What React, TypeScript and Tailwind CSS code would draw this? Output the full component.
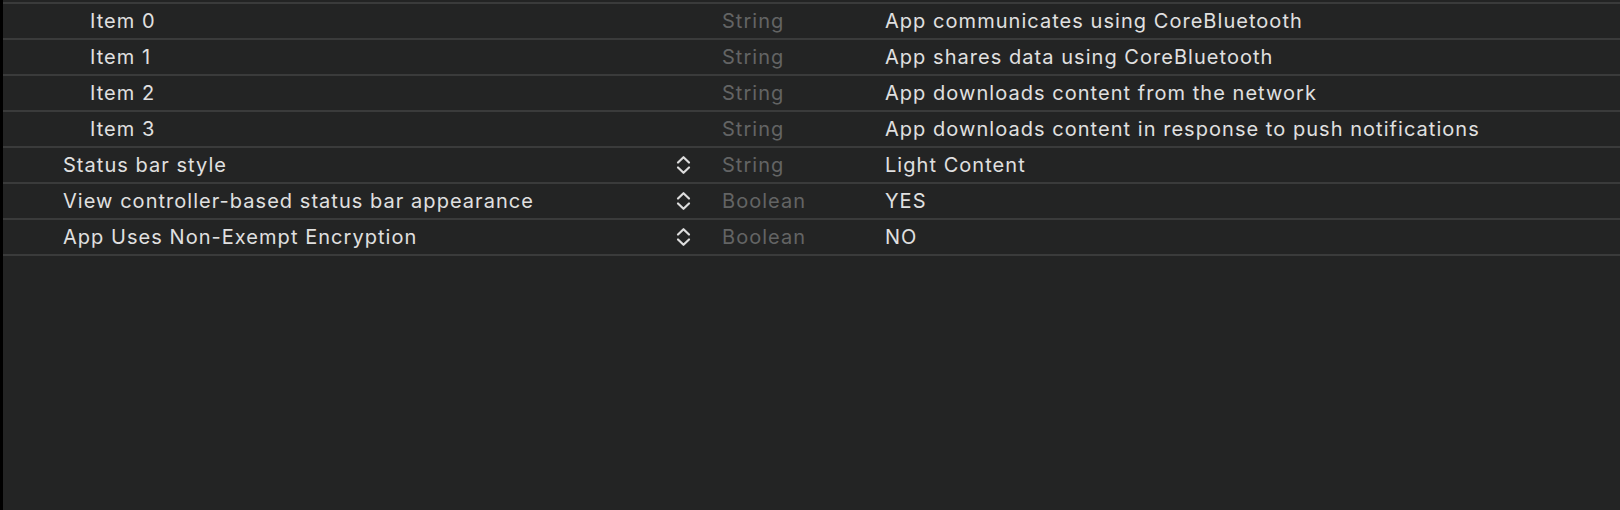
import React from "react";

type Row = {
  name: string;
  type: string;
  value: string;
  child?: boolean;
};

const rows: Row[] = [
  { name: "Item 0", type: "String", value: "App communicates using CoreBluetooth", child: true },
  { name: "Item 1", type: "String", value: "App shares data using CoreBluetooth", child: true },
  { name: "Item 2", type: "String", value: "App downloads content from the network", child: true },
  { name: "Item 3", type: "String", value: "App downloads content in response to push notifications", child: true },
  { name: "Status bar style", type: "String", value: "Light Content" },
  { name: "View controller-based status bar appearance", type: "Boolean", value: "YES" },
  { name: "App Uses Non-Exempt Encryption", type: "Boolean", value: "NO" },
];

const Stepper = () => (
  <svg width="15" height="20" viewBox="0 0 15 20" fill="none" stroke="#dcdcdc" strokeWidth="2.2" strokeLinecap="round" strokeLinejoin="round">
    <path d="M2 7.5 L7.5 2.2 L13 7.5" />
    <path d="M2 12.5 L7.5 17.8 L13 12.5" />
  </svg>
);

const App: React.FC = () => {
  return (
    <div className="w-[1620px] h-[510px] bg-[#232424] flex overflow-hidden" style={{ fontFamily: "Inter, 'Liberation Sans', sans-serif" }}>
      <div className="w-[3px] bg-black shrink-0" />
      <div className="flex-1 flex flex-col pt-[2px]">
        {rows.map((r) => (
          <div key={r.name} className="h-[36px] border-t-2 border-[#3a3b3b] flex items-center text-[20px] tracking-[0.052em] text-[#e0e0e0] pb-[1px]">
            <div className={"w-[673px] shrink-0 " + (r.child ? "pl-[87px]" : "pl-[60px]")}>{r.name}</div>
            <div className="w-[46px] shrink-0 flex items-center">
              {!r.child && <Stepper />}
            </div>
            <div className="w-[163px] shrink-0 text-[#636464]">{r.type}</div>
            <div className="flex-1">{r.value}</div>
          </div>
        ))}
        <div className="border-t-2 border-[#3a3b3b]" />
      </div>
    </div>
  );
};

export default App;
